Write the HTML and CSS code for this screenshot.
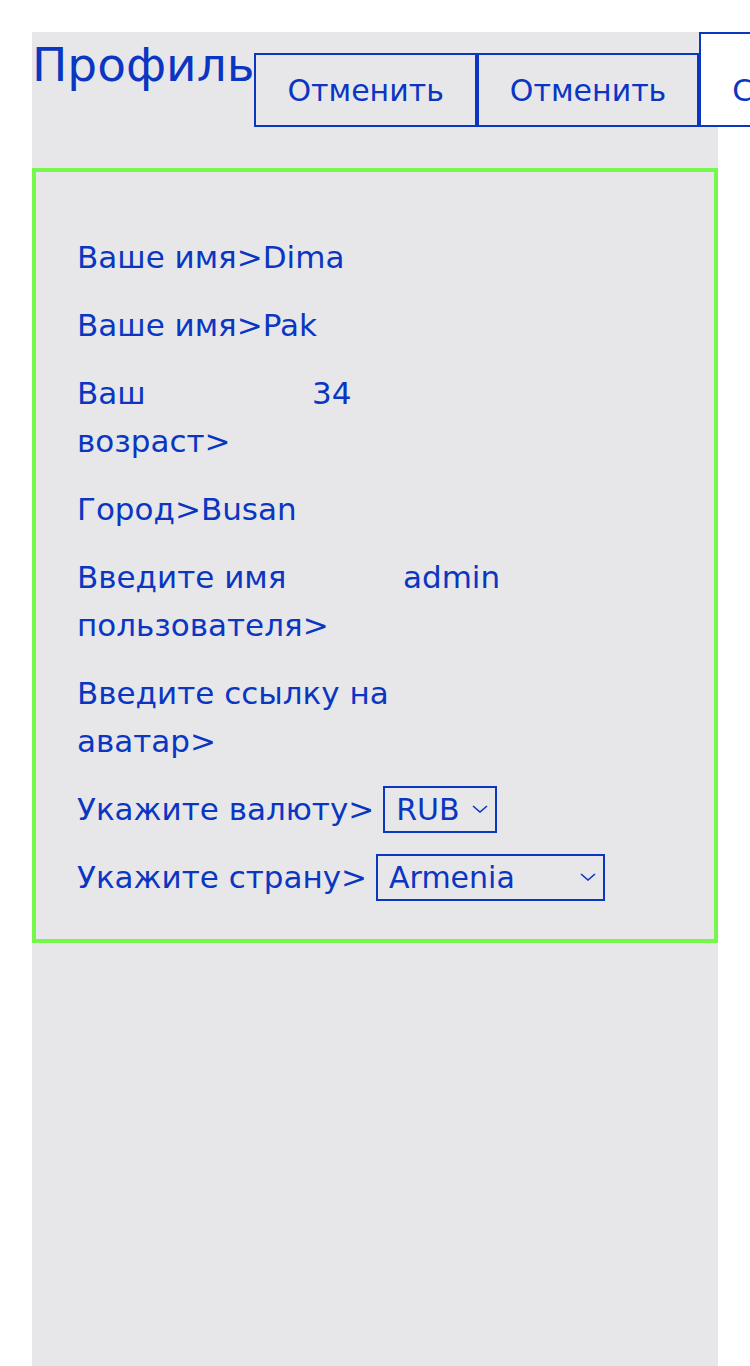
FILE: index.html
```html
<!DOCTYPE html>
<html lang="ru">
<head>
<meta charset="utf-8">
<title>Профиль</title>
<link rel="stylesheet" href="styles.css">
</head>
<body>
<div class="page">
  <header class="header">
    <h1 class="title">Профиль</h1>
    <button class="btn" type="button">Отменить</button>
    <button class="btn" type="button">Отменить</button>
    <button class="btn btn--save" type="button">Сохранить</button>
  </header>
  <form class="form">
    <div class="row">
      <label class="label">Ваше имя&gt;</label>
      <input class="value" type="text" value="Dima" readonly>
    </div>
    <div class="row">
      <label class="label">Ваше имя&gt;</label>
      <input class="value" type="text" value="Pak" readonly>
    </div>
    <div class="row">
      <label class="label label--age">Ваш возраст&gt;</label>
      <input class="value" type="text" value="34" readonly>
    </div>
    <div class="row">
      <label class="label">Город&gt;</label>
      <input class="value" type="text" value="Busan" readonly>
    </div>
    <div class="row">
      <label class="label label--long">Введите имя пользователя&gt;</label>
      <input class="value" type="text" value="admin" readonly>
    </div>
    <div class="row">
      <label class="label label--long">Введите ссылку на аватар&gt;</label>
      <input class="value" type="text" value="" readonly>
    </div>
    <div class="row">
      <label class="label">Укажите валюту&gt;</label>
      <span class="select-wrap select-wrap--currency">
        <select class="select">
          <option>RUB</option>
          <option>USD</option>
        </select>
        <svg class="chevron" width="16" height="8" viewBox="0 0 16 8"><path d="M1 1 L8 7 L15 1" fill="none" stroke="currentColor" stroke-width="1.6"/></svg>
      </span>
    </div>
    <div class="row">
      <label class="label">Укажите страну&gt;</label>
      <span class="select-wrap select-wrap--country">
        <select class="select">
          <option>Armenia</option>
          <option>Russia</option>
        </select>
        <svg class="chevron" width="16" height="8" viewBox="0 0 16 8"><path d="M1 1 L8 7 L15 1" fill="none" stroke="currentColor" stroke-width="1.6"/></svg>
      </span>
    </div>
  </form>
</div>
</body>
</html>
```

FILE: styles.css
```css
html, body {
  margin: 0;
  padding: 0;
  background: #ffffff;
}

body {
  font-family: "DejaVu Sans", Verdana, sans-serif;
  color: #0a36c2;
  overflow: hidden;
}

.page {
  margin: 32px 0 0 32px;
  width: 686px;
  min-height: 1334px;
  background: #e7e7ea;
}

.header {
  display: flex;
  align-items: flex-end;
  height: 95px;
  margin-bottom: 41px;
}

.title {
  align-self: flex-start;
  flex-shrink: 0;
  margin: 5px 0 0 0;
  font-size: 47px;
  font-weight: normal;
  line-height: normal;
  white-space: nowrap;
}

.btn {
  flex-shrink: 0;
  box-sizing: border-box;
  height: 74px;
  padding: 0 31px;
  margin: 0;
  border: 2px solid #0a36c2;
  background: transparent;
  color: #0a36c2;
  font-family: inherit;
  font-size: 30px;
  white-space: nowrap;
}

.btn--save {
  height: 95px;
  padding-top: 21px;
  background: #ffffff;
}

.form {
  border: 4px solid #76f74c;
  padding: 61px 41px 38px 41px;
  display: flex;
  flex-direction: column;
  gap: 20px;
}

.row {
  display: flex;
  align-items: flex-start;
  font-size: 31px;
  line-height: 48px;
}

.label {
  flex-shrink: 0;
}

.label--age {
  box-sizing: border-box;
  width: 235px;
  padding-right: 40px;
}

.label--long {
  width: 326px;
}

.value {
  width: 240px;
  height: 48px;
  padding: 0;
  margin: 0;
  border: none;
  outline: none;
  background: transparent;
  color: #0a36c2;
  font-family: inherit;
  font-size: 31px;
  line-height: 48px;
}

.select-wrap {
  position: relative;
  display: inline-block;
  margin-left: 9px;
  color: #0a36c2;
}

.select {
  -webkit-appearance: none;
  appearance: none;
  box-sizing: border-box;
  height: 47px;
  margin: 0;
  padding: 0 0 0 11px;
  border: 2px solid #0a36c2;
  border-radius: 0;
  background: transparent;
  color: #0a36c2;
  font-family: inherit;
  font-size: 30px;
  line-height: 43px;
}

.select-wrap--currency .select {
  width: 114px;
}

.select-wrap--country .select {
  width: 229px;
}

.chevron {
  position: absolute;
  right: 9px;
  top: 20px;
  pointer-events: none;
}
```
